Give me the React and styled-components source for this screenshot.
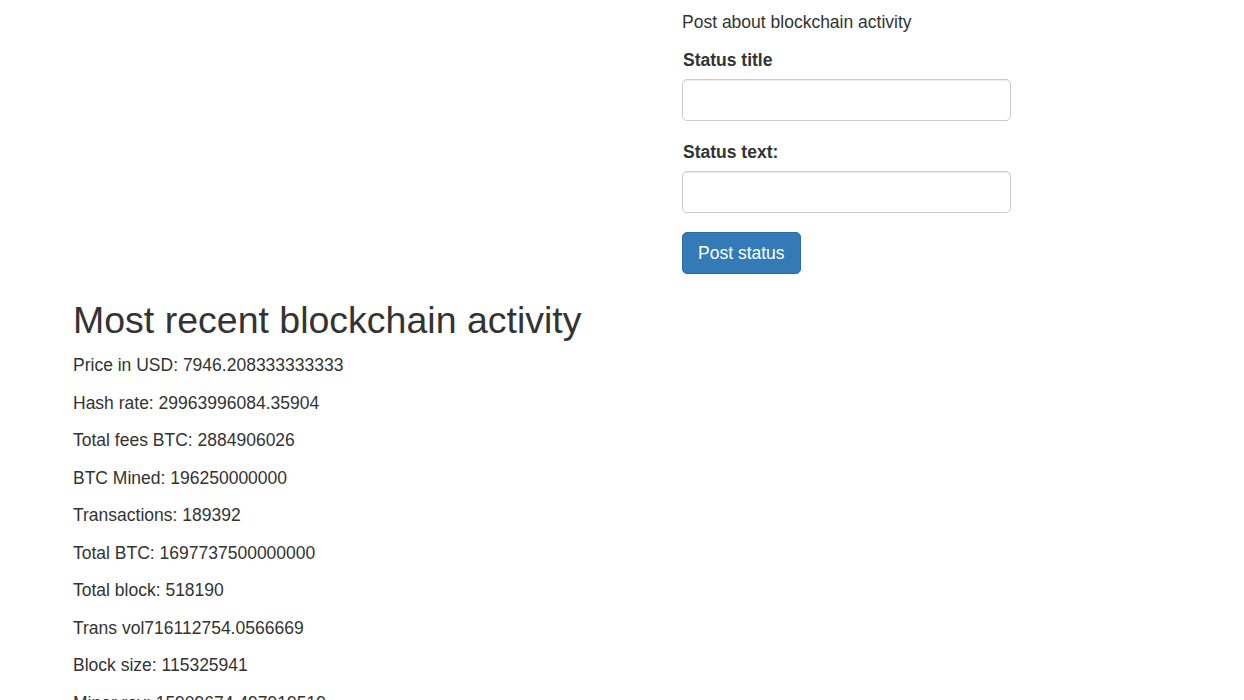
import React from 'react';
import styled, { createGlobalStyle } from 'styled-components';

const GlobalStyle = createGlobalStyle`
  html, body {
    margin: 0;
    padding: 0;
    background: #fff;
  }
  body {
    font-family: "Liberation Sans", Arial, Helvetica, sans-serif;
    font-size: 17.5px;
    line-height: 25px;
    color: #333;
  }
  * {
    box-sizing: border-box;
  }
`;

const stats = [
  ['Price in USD: ', '7946.208333333333'],
  ['Hash rate: ', '29963996084.35904'],
  ['Total fees BTC: ', '2884906026'],
  ['BTC Mined: ', '196250000000'],
  ['Transactions: ', '189392'],
  ['Total BTC: ', '1697737500000000'],
  ['Total block: ', '518190'],
  ['Trans vol', '716112754.0566669'],
  ['Block size: ', '115325941'],
  ['Miner rev: ', '15909674.497919519'],
];

const App = () => {
  return (
    <Page>
      <GlobalStyle />
      <Row>
        <Column />
        <FormColumn>
          <Intro>Post about blockchain activity</Intro>
          <form onSubmit={(e) => e.preventDefault()}>
            <FormGroup>
              <Label htmlFor="title">Status title</Label>
              <Input id="title" type="text" />
            </FormGroup>
            <FormGroup>
              <Label htmlFor="text">Status text:</Label>
              <Input id="text" type="text" />
            </FormGroup>
            <Button type="submit">Post status</Button>
          </form>
        </FormColumn>
      </Row>
      <Activity>
        <Heading>Most recent blockchain activity</Heading>
        {stats.map(([label, value]) => (
          <Stat key={label}>
            {label}
            {value}
          </Stat>
        ))}
      </Activity>
    </Page>
  );
};

const Page = styled.div`
  padding: 10px 0 0 73px;
`;

const Row = styled.div`
  display: flex;
`;

const Column = styled.div`
  width: 609px;
  flex-shrink: 0;
`;

const FormColumn = styled.div`
  width: 329px;
`;

const Intro = styled.p`
  margin: 0 0 12.5px;
`;

const FormGroup = styled.div`
  margin-bottom: 18.75px;
`;

const Label = styled.label`
  display: inline-block;
  margin-bottom: 6.25px;
  padding-left: 1px;
  font-weight: bold;
`;

const Input = styled.input`
  display: block;
  width: 100%;
  height: 42px;
  padding: 7.5px 15px;
  font-family: inherit;
  font-size: 17.5px;
  color: #555;
  background: #fff;
  border: 1px solid #ccc;
  border-radius: 5px;
  box-shadow: inset 0 1px 1px rgba(0, 0, 0, 0.075);
  outline: none;
`;

const Button = styled.button`
  display: inline-block;
  height: 42px;
  padding: 7.5px 15px;
  font-family: inherit;
  font-size: 17.5px;
  line-height: 26px;
  color: #fff;
  background: #337ab7;
  border: 1px solid #2e6da4;
  border-radius: 5px;
  cursor: pointer;
`;

const Activity = styled.div`
  padding-top: 26px;
`;

const Heading = styled.h2`
  margin: 0 0 12.5px;
  font-size: 37.5px;
  font-weight: 500;
  line-height: 1.1;
  color: #333;
`;

const Stat = styled.p`
  margin: 0 0 12.5px;
`;

export default App;
